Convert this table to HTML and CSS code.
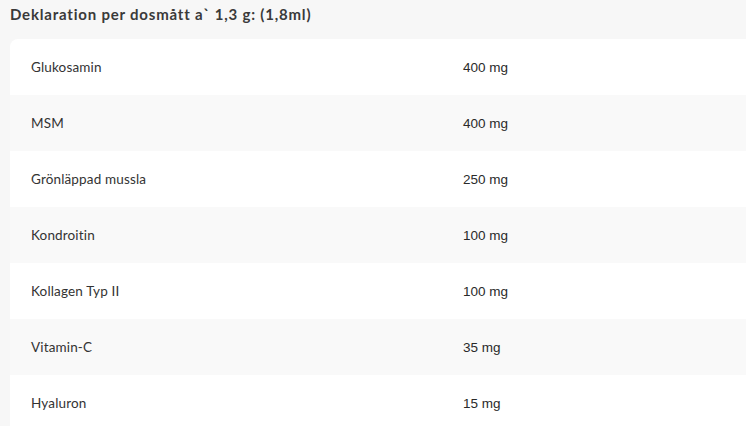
FILE: index.html
```html
<!DOCTYPE html>
<html lang="sv">
<head>
    <meta charset="UTF-8">
    <meta name="viewport" content="width=device-width, initial-scale=1.0">
    <title>Deklaration</title>
    <link rel="stylesheet" href="styles.css">
</head>
<body>
    <main>
        <h2 class="decl-title">Deklaration per dosmått a` 1,3 g: (1,8ml)</h2>
        <div class="decl-table">
            <div class="decl-row">
                <div class="decl-name">Glukosamin</div>
                <div class="decl-value">400 mg</div>
            </div>
            <div class="decl-row">
                <div class="decl-name">MSM</div>
                <div class="decl-value">400 mg</div>
            </div>
            <div class="decl-row">
                <div class="decl-name">Grönläppad mussla</div>
                <div class="decl-value">250 mg</div>
            </div>
            <div class="decl-row">
                <div class="decl-name">Kondroitin</div>
                <div class="decl-value">100 mg</div>
            </div>
            <div class="decl-row">
                <div class="decl-name">Kollagen Typ II</div>
                <div class="decl-value">100 mg</div>
            </div>
            <div class="decl-row">
                <div class="decl-name">Vitamin-C</div>
                <div class="decl-value">35 mg</div>
            </div>
            <div class="decl-row">
                <div class="decl-name">Hyaluron</div>
                <div class="decl-value">15 mg</div>
            </div>
        </div>
    </main>
</body>
</html>
```

FILE: styles.css
```css
/* 基本 */
body {
    margin: 0;
    padding: 0;
    background-color: #f7f7f7;
    color: #333;
    font-family: 'Lato', 'Open Sans', sans-serif;
    overflow: hidden;
}

main {
    padding-left: 10px;
}

/* 見出し */
.decl-title {
    margin: 0;
    height: 39px;
    padding-top: 5px;
    box-sizing: border-box;
    font-size: 15px;
    font-weight: 700;
    color: #3a3a3a;
    letter-spacing: 0.8px;
}

/* 表 */
.decl-table {
    width: 736px;
    background-color: #fff;
    border-radius: 8px 0 0 0;
    overflow: hidden;
}

.decl-row {
    display: grid;
    grid-template-columns: 432px 1fr;
    align-items: center;
    height: 56px;
    padding-left: 21px;
}

.decl-row:nth-child(even) {
    background-color: #f9f9f9;
}

.decl-name {
    font-size: 13.5px;
    letter-spacing: 0.15px;
    color: #333;
}

.decl-value {
    font-family: 'Liberation Sans', Arial, sans-serif;
    font-size: 13.5px;
    color: #2a2a2a;
}
```
